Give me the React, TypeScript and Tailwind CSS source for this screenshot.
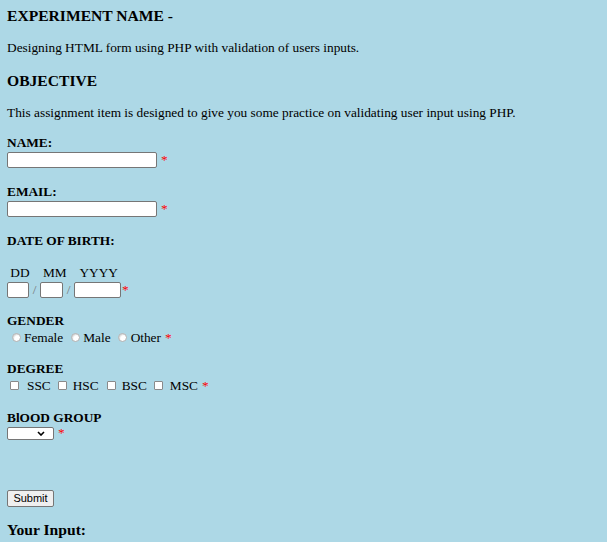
const star = "text-[#ff0000]";

function Req({ className = "" }: { className?: string }) {
  return <span className={`${star} leading-[15px] ${className}`}>*</span>;
}

function Radio() {
  return (
    <span className="mt-[3px] inline-block h-[9px] w-[9px] rounded-full border border-[#b0b0b0] bg-white shadow-[inset_1px_1px_1px_rgba(0,0,0,0.15)]" />
  );
}

function Check() {
  return (
    <span className="mt-[3px] inline-block h-[9px] w-[9px] rounded-[1px] border border-[#8a8a8a] bg-white" />
  );
}

function TextBox({ w }: { w: string }) {
  return (
    <span
      className={`inline-block h-[16px] ${w} rounded-[2px] border border-[#767676] bg-white`}
    />
  );
}

export default function App() {
  return (
    <div className="min-h-screen bg-[#add8e6] px-[7px] pt-[7px] font-['Liberation_Serif',serif] text-[13.33px] leading-[15px] text-black">
      <h3 className="text-[15.6px] font-bold leading-[18px]">EXPERIMENT NAME -</h3>
      <p className="mt-[15px]">
        Designing HTML form using PHP with validation of users inputs.
      </p>
      <h3 className="mt-[17px] text-[15.6px] font-bold leading-[18px]">OBJECTIVE</h3>
      <p className="mt-[15px]">
        This assignment item is designed to give you some practice on validating user input using PHP.
      </p>

      <div className="mt-[15px] font-bold">NAME:</div>
      <div className="mt-[2px] flex items-start">
        <TextBox w="w-[150px]" />
        <Req className="ml-[4px]" />
      </div>

      <div className="mt-[16px] font-bold">EMAIL:</div>
      <div className="mt-[2px] flex items-start">
        <TextBox w="w-[150px]" />
        <Req className="ml-[4px]" />
      </div>

      <div className="mt-[16px] font-bold">DATE OF BIRTH:</div>
      <div className="mt-[17px] whitespace-pre">{" DD    MM    YYYY"}</div>
      <div className="mt-[2px] flex items-start">
        <TextBox w="w-[22px]" />
        <span className="w-[11px] text-center leading-[15px] text-[#777]">/</span>
        <TextBox w="w-[23px]" />
        <span className="w-[11px] text-center leading-[15px] text-[#777]">/</span>
        <TextBox w="w-[47px]" />
        <Req className="ml-[1px]" />
      </div>

      <div className="mt-[15px] font-bold">GENDER</div>
      <div className="mt-[2px] flex items-start">
        <span className="ml-[5px]"><Radio /></span>
        <span className="ml-[3px]">Female</span>
        <span className="ml-[8px]"><Radio /></span>
        <span className="ml-[3px]">Male</span>
        <span className="ml-[7px]"><Radio /></span>
        <span className="ml-[4px]">Other</span>
        <Req className="ml-[4px]" />
      </div>

      <div className="mt-[16px] font-bold">DEGREE</div>
      <div className="mt-[2px] flex items-start">
        <span className="ml-[3px]"><Check /></span>
        <span className="ml-[8px]">SSC</span>
        <span className="ml-[7px]"><Check /></span>
        <span className="ml-[6px]">HSC</span>
        <span className="ml-[8px]"><Check /></span>
        <span className="ml-[6px]">BSC</span>
        <span className="ml-[7px]"><Check /></span>
        <span className="ml-[7px]">MSC</span>
        <Req className="ml-[4px]" />
      </div>

      <div className="mt-[17px] font-bold">BlOOD GROUP</div>
      <div className="mt-[2px] flex items-start">
        <span className="flex h-[13px] w-[47px] items-center justify-end rounded-[2px] border border-[#767676] bg-white pr-[8px]">
          <svg width="8" height="5" viewBox="0 0 8 5" fill="none">
            <path d="M1 1l3 3 3-3" stroke="#000" strokeWidth="1.6" />
          </svg>
        </span>
        <Req className="ml-[4px] -mt-[2px]" />
      </div>

      <button className="mt-[50px] flex h-[17px] w-[47px] items-center justify-center rounded-[2px] border border-[#767676] bg-[#efefef] font-['Liberation_Sans',Arial,sans-serif] text-[11px] leading-none">
        Submit
      </button>

      <h3 className="mt-[14px] text-[15.6px] font-bold leading-[18px]">Your Input:</h3>
    </div>
  );
}
